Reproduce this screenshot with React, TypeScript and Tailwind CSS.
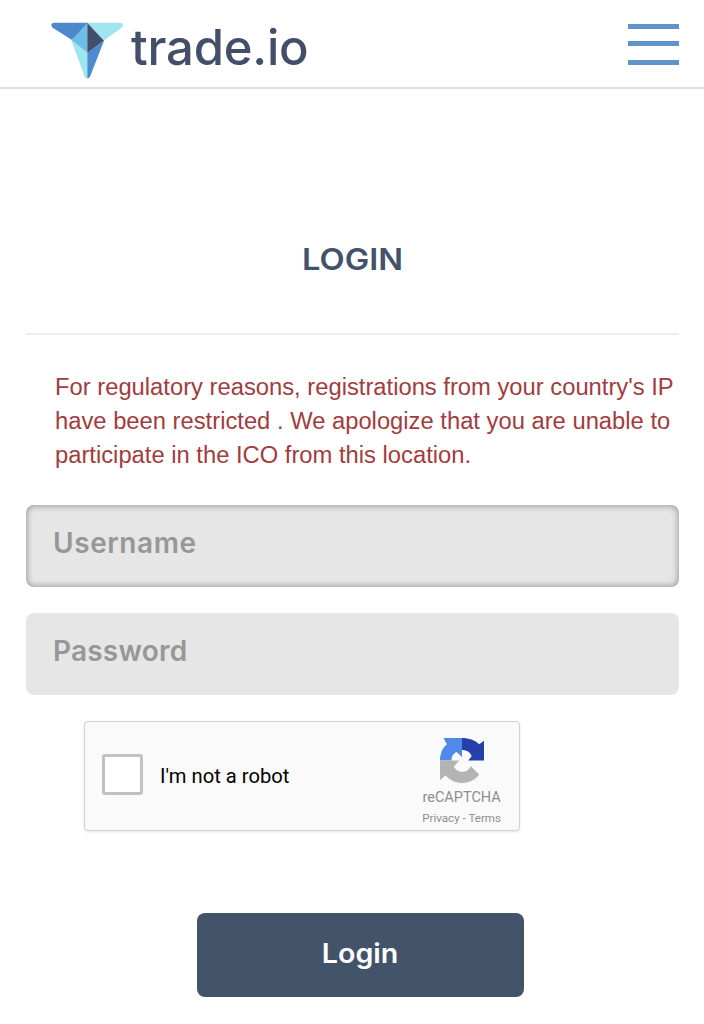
import React from "react";

function BrandMark() {
  return (
    <svg className="h-[57px] w-[73px] shrink-0" viewBox="0 0 219 171" aria-hidden="true">
      <path d="M9 2H111V4L63 54L5 17Q-5 4 9 2Z" fill="#4c88cb" />
      <path d="M108 2H206Q222 4 212 17L158 56L108 4Z" fill="#a0e6f0" />
      <path d="M109 3V93L61 55Z" fill="#6bbfe6" />
      <path d="M109 3L159 56L109 93Z" fill="#424f6b" />
      <path d="M61 55L109 92V169Q103 169 101 164Z" fill="#9de6ee" />
      <path d="M159 56L109 92V169Q115 169 117 164Z" fill="#4c8bce" />
    </svg>
  );
}

function RecaptchaMark() {
  return (
    <svg className="ml-px h-[45px] w-[44px]" viewBox="0 0 64 64" preserveAspectRatio="none" aria-hidden="true">
      <path fill="#2540a8" d="M32 0C42 0 51 3 57 9L64 4V32H41L46 26C44 20 39 17 32 17Z" />
      <path fill="#4f8aea" d="M32 0V27L24 20C20 22 16 26 17 32H0C0 22 4 14 10 9L5 0Z" />
      <path fill="#b4b4b4" d="M0 32H28L20 41C23 46 27 48 32 48C38 48 42 45 45 40L57 52C51 60 42 64 32 64C23 64 14 60 8 53L0 60Z" />
    </svg>
  );
}

export default function App() {
  return (
    <div className="flex h-[1024px] w-full flex-col bg-white font-['Inter',sans-serif]">
      <header className="flex h-[89px] shrink-0 items-start justify-between border-b-2 border-[#dedede] pr-[25px] pl-[51px]">
        <div className="flex items-start pt-[22px]">
          <BrandMark />
          <span className="ml-[7px] text-[49px] leading-[51px] font-medium tracking-[-0.2px] text-[#434f68]">trade.io</span>
        </div>
        <button className="flex w-[51px] flex-col pt-6" aria-label="Menu">
          <span className="h-[5px] w-full bg-[#5f93ca]" />
          <span className="mt-3 h-[5px] w-full bg-[#5f93ca]" />
          <span className="mt-[14px] h-[5px] w-full bg-[#5f93ca]" />
        </button>
      </header>
      <main className="flex flex-col pr-[25px] pl-[26px]">
        <h1 className="mt-[150px] scale-x-[1.09] text-center text-[30px] leading-[40px] font-semibold text-[#42526a]">LOGIN</h1>
        <hr className="mt-[54px] h-[2px] border-0 bg-[#eeeeee]" />
        <div className="mt-[35px] pl-[29px] font-['Liberation_Sans',sans-serif] text-[23.78px] leading-[34px] whitespace-nowrap text-[#a13c3f]">
          <p>For regulatory reasons, registrations from your country's IP</p>
          <p>have been restricted . We apologize that you are unable to</p>
          <p>participate in the ICO from this location.</p>
        </div>
        <input
          aria-label="Username"
          placeholder="Username"
          className="mt-[33px] h-[82px] rounded-lg bg-[#e6e6e6] px-[27px] pb-[7px] text-[28px] font-semibold tracking-[0.6px] shadow-[inset_0_0_6px_1px_#9a9a9a] outline-none placeholder:text-[#979797]"
        />
        <input
          aria-label="Password"
          type="password"
          placeholder="Password"
          className="mt-[26px] h-[82px] rounded-lg bg-[#e6e6e6] px-[27px] pb-[7px] text-[28px] font-semibold tracking-[0.2px] outline-none placeholder:text-[#979797]"
        />
        <section className="mt-[26px] ml-[58px] flex h-[110px] w-[436px] items-start rounded-[4px] border-[1.5px] border-[#d2d2d2] bg-[#fafafa] pl-[17px] font-['Roboto',sans-serif] shadow-[0_1px_3px_#0000001c]">
          <span className="mt-[32px] h-[41px] w-[41px] rounded-[3px] border-[3px] border-[#c1c1c1] bg-white" />
          <span className="mt-[40px] ml-[17px] text-[20.2px] leading-[28px] text-black">I'm not a robot</span>
          <div className="mr-[18px] ml-auto flex flex-col items-center pt-[16px] text-[#8e8e8e]">
            <RecaptchaMark />
            <span className="mt-[6px] text-[14.5px] leading-[18px]">reCAPTCHA</span>
            <span className="mt-[3px] text-[11.6px] leading-[16px]">Privacy - Terms</span>
          </div>
        </section>
        <button className="mt-[82px] ml-[171px] h-[84px] w-[327px] rounded-lg bg-[#43536a] pb-[1px] text-[27px] font-semibold text-white">
          <span className="inline-block scale-x-[1.06]">Login</span>
        </button>
      </main>
    </div>
  );
}
